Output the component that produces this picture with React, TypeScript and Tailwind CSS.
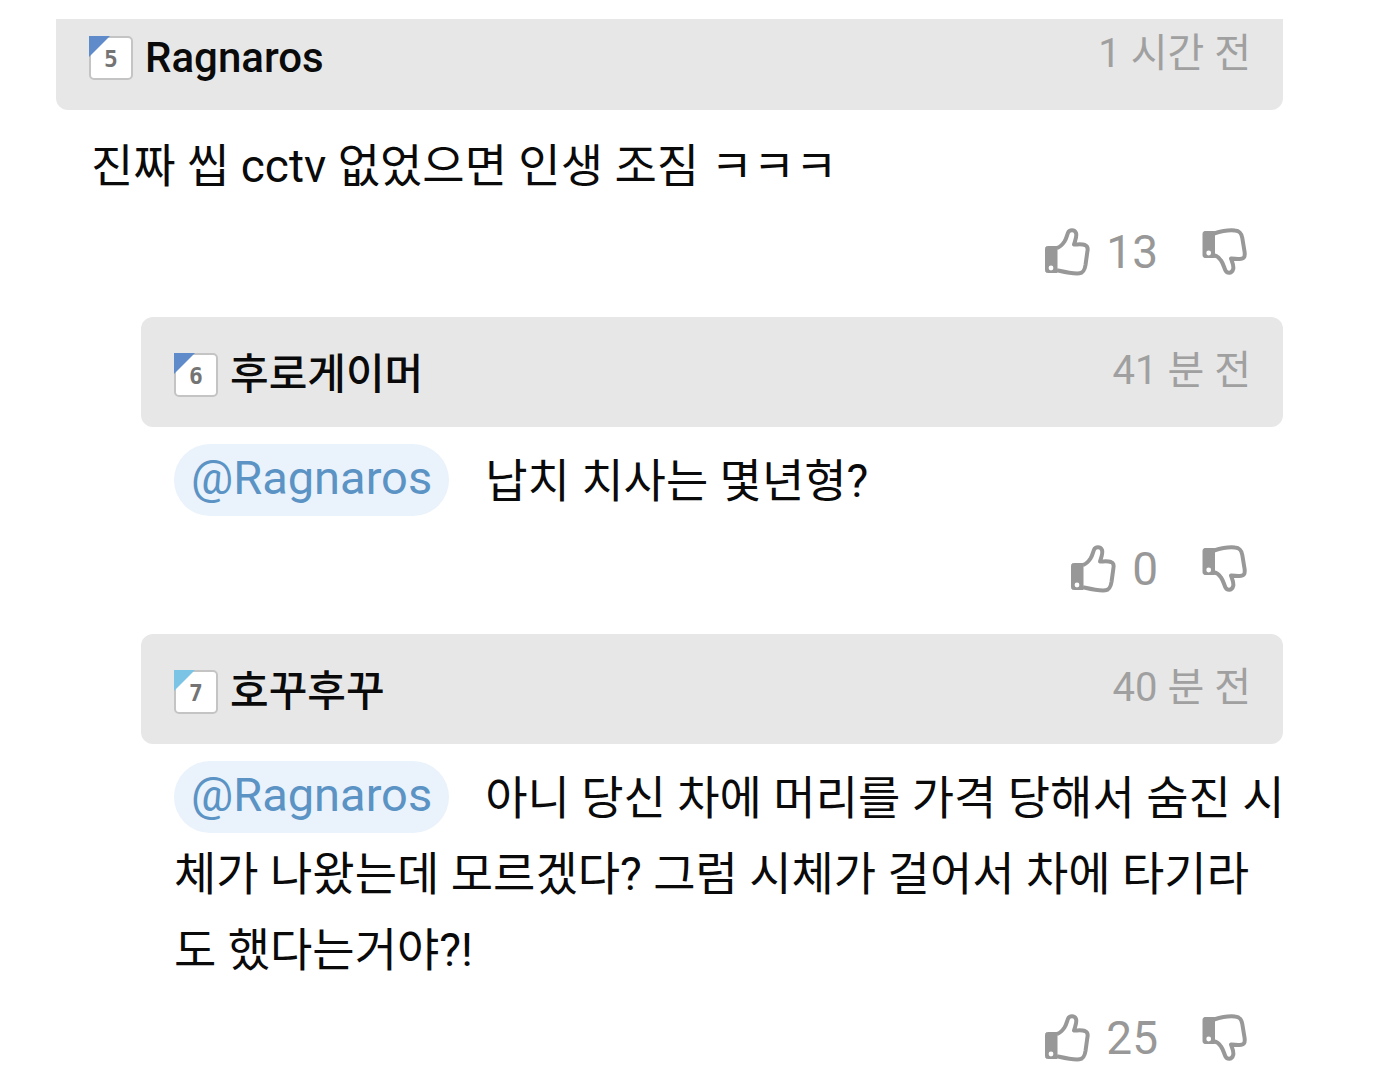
import React from "react";

// Define the type for a single comment
interface Comment {
  name: string;
  level: number;
  time: string;
  text: string;
  likes: number;
  mention?: string;
}

interface CommentProps {
  comment: Comment;
  reply?: boolean;
}

const comments: Comment[] = [
  { name: "Ragnaros", level: 5, time: "1 시간 전", text: "진짜 씹 cctv 없었으면 인생 조짐 ㅋㅋㅋ", likes: 13 },
  { name: "후로게이머", level: 6, time: "41 분 전", text: "납치 치사는 몇년형?", likes: 0, mention: "Ragnaros" },
  {
    name: "호꾸후꾸",
    level: 7,
    time: "40 분 전",
    text: "아니 당신 차에 머리를 가격 당해서 숨진 시체가 나왔는데 모르겠다? 그럼 시체가 걸어서 차에 타기라도 했다는거야?!",
    likes: 25,
    mention: "Ragnaros",
  },
];

// Corner colour for each level
const cornerColors: Record<number, string> = {
  5: "fill-[#5f8bcb]",
  6: "fill-[#5f8bcb]",
  7: "fill-[#7cc4e6]",
};

const LevelBadge: React.FC<{ level: number }> = ({ level }) => (
  <svg className="size-11 shrink-0" viewBox="0 0 44 44" aria-label={`Level ${level}`}>
    <rect x="1" y="1" width="42" height="42" rx="4" fill="#fff" stroke="#c4c4c4" strokeWidth="2" />
    <path d="M0 0H21L0 21Z" className={cornerColors[level]} />
    <text x="22" y="31" textAnchor="middle" fontFamily="DejaVu Sans Mono, monospace" fontSize="23" fontWeight="700" fill="#747474">
      {level}
    </text>
  </svg>
);

const ThumbUp = () => (
  <svg className="h-12 w-[46px]" viewBox="0 0 46 48" fill="none">
    <path
      d="M12 20C15.5 19 17.5 16.5 19.5 13.5C21.5 10.5 21.8 7.5 23 4.8C24.4 1.5 29.5 1.2 31 5C32.2 8.5 30 12.5 29 16.5C33 16.5 36.5 15.8 40 17C43.2 18.2 43 21 42.3 24L40.5 37C39.5 43 38 45 34.5 45.3C27 46 19.5 44 12 42.3"
      stroke="#989898"
      strokeWidth="4"
      strokeLinejoin="round"
    />
    <path d="M2.5 18.5H12V44.5H2.5Q.5 44.5 .5 42.5V20.5Q.5 18.5 2.5 18.5Z" fill="#989898" stroke="#989898" strokeWidth="1" />
    <circle cx="6" cy="40" r="2.4" fill="#fff" />
  </svg>
);

const ThumbDown = () => (
  <svg className="h-12 w-[46px]" viewBox="0 0 46 48" fill="none">
    <path
      d="M12 5.5C19 3.3 26 1.5 33 2.5C38 3 39.5 5.5 40.3 10L42.6 24C43.2 29 42 31 37.5 31C34.5 31.2 31.5 30.8 29 30.5C30.5 34.5 32 38 31.2 41C30 45.5 25.5 46 23.5 42.5C22 39.5 21.5 36 19 32.5C17 29.5 15 27.8 12 27.3"
      stroke="#989898"
      strokeWidth="4"
      strokeLinejoin="round"
    />
    <path d="M3 3.5H12.5V29.5H3Q1 29.5 1 27.5V5.5Q1 3.5 3 3.5Z" fill="#989898" stroke="#989898" strokeWidth="1" />
    <circle cx="6.7" cy="25" r="2.4" fill="#fff" />
  </svg>
);

const CommentItem: React.FC<CommentProps> = ({ comment, reply }) => {
  const { name, level, time, text, likes, mention } = comment;
  return (
    <article className={reply ? "ml-[85px]" : ""}>
      <header
        className={`flex items-end justify-between bg-[#e7e7e7] pr-8 pl-[33px] pb-7 ${
          reply ? "rounded-xl pt-[30px]" : "rounded-b-xl pt-[11px]"
        }`}
      >
        <div className="flex h-12 items-center gap-3">
          <LevelBadge level={level} />
          <h2 className="text-[42px] leading-12 font-medium">{name}</h2>
        </div>
        <time className="pb-1 text-[40px] leading-12 text-[#a0a0a0]">{time}</time>
      </header>
      <p className={`text-[46px] leading-[76px] break-all ${reply ? "-mr-1 pt-4 pb-0.5 pl-[33px]" : "px-[35px] pt-[18px]"}`}>
        {mention && (
          <a
            href={`#${mention}`}
            className="mr-9 rounded-full bg-[#eaf2fb] px-[17px] pt-1.5 pb-[11px] align-[3px] text-[47px] leading-none text-[#5b93c4]"
          >
            {`@${mention}`}
          </a>
        )}
        {text}
      </p>
      <div className="flex justify-end gap-11 px-[35px] pt-6 pb-[41px]">
        <button type="button" aria-label="Like" className="flex h-12 items-center gap-[15px] text-[46px] leading-12 text-[#989898]">
          <ThumbUp />
          {likes}
        </button>
        <button type="button" aria-label="Dislike">
          <ThumbDown />
        </button>
      </div>
    </article>
  );
};

export default function App() {
  return (
    <main className="bg-white pt-[19px] pr-[93px] pl-14 font-[Roboto,'Noto_Sans_CJK_KR',sans-serif] text-[#0a0a0a]">
      {comments.map((comment, index) => (
        <CommentItem key={comment.name} comment={comment} reply={index > 0} />
      ))}
    </main>
  );
}
